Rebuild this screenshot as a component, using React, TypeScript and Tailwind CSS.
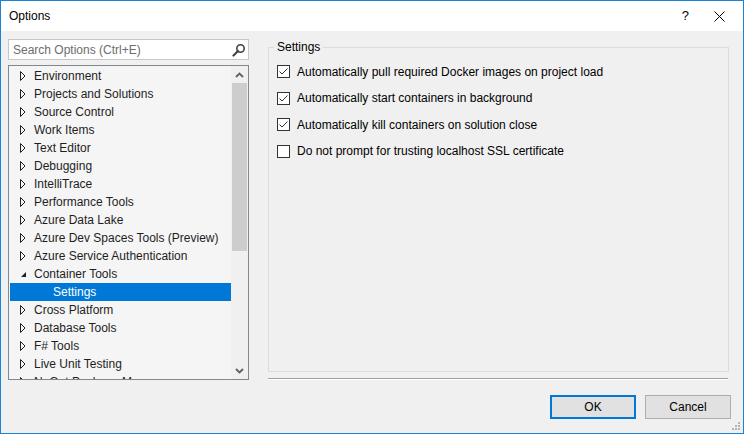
import React from "react";

const TREE_ITEMS: { label: string; level: number; expanded?: boolean; selected?: boolean }[] = [
  { label: "Environment", level: 0 },
  { label: "Projects and Solutions", level: 0 },
  { label: "Source Control", level: 0 },
  { label: "Work Items", level: 0 },
  { label: "Text Editor", level: 0 },
  { label: "Debugging", level: 0 },
  { label: "IntelliTrace", level: 0 },
  { label: "Performance Tools", level: 0 },
  { label: "Azure Data Lake", level: 0 },
  { label: "Azure Dev Spaces Tools (Preview)", level: 0 },
  { label: "Azure Service Authentication", level: 0 },
  { label: "Container Tools", level: 0, expanded: true },
  { label: "Settings", level: 1, selected: true },
  { label: "Cross Platform", level: 0 },
  { label: "Database Tools", level: 0 },
  { label: "F# Tools", level: 0 },
  { label: "Live Unit Testing", level: 0 },
  { label: "NuGet Package Manager", level: 0 },
];

const OPTIONS = [
  { label: "Automatically pull required Docker images on project load", checked: true },
  { label: "Automatically start containers in background", checked: true },
  { label: "Automatically kill containers on solution close", checked: true },
  { label: "Do not prompt for trusting localhost SSL certificate", checked: false },
];

function Collapsed() {
  return (
    <svg width="6" height="10" viewBox="0 0 6 10" className="shrink-0">
      <path d="M0.5 0.5 L5 5 L0.5 9.5 Z" fill="none" stroke="#1e1e1e" strokeWidth="1" />
    </svg>
  );
}

function Expanded() {
  return (
    <svg width="6" height="10" viewBox="0 0 6 10" className="shrink-0">
      <path d="M6 3 L6 8 L1 8 Z" fill="#1e1e1e" />
    </svg>
  );
}

function CheckBox({ checked }: { checked: boolean }) {
  return (
    <span className="w-[13px] h-[13px] border border-[#333333] bg-white flex items-center justify-center shrink-0">
      {checked && (
        <svg width="11" height="11" viewBox="0 0 11 11">
          <path d="M1.5 5.5 L4 8 L9.5 2.5" fill="none" stroke="#333333" strokeWidth="1" />
        </svg>
      )}
    </span>
  );
}

export default function App() {
  return (
    <div className="w-[744px] h-[434px] border border-[#1883d7] bg-[#f0f0f0] flex flex-col font-['Segoe_UI','Liberation_Sans',sans-serif] text-[12px] text-black overflow-hidden">
      {/* title bar */}
      <div className="h-[30px] bg-white flex items-center shrink-0">
        <span className="ml-[8px] text-[12px]">Options</span>
        <span className="ml-auto mr-[25px] text-[13px]">?</span>
        <svg width="11" height="11" viewBox="0 0 11 11" className="mr-[18px]">
          <path d="M0.5 0.5 L10.5 10.5 M10.5 0.5 L0.5 10.5" stroke="#000" strokeWidth="1" />
        </svg>
      </div>

      <div className="flex flex-1 pl-[7px]">
        {/* left column */}
        <div className="w-[241px] flex flex-col pt-[8px] shrink-0">
          <div className="h-[21px] border border-[#c7c7c7] bg-white flex items-center pl-[4px] pr-[2px]">
            <span className="text-[#6d6d6d]">Search Options (Ctrl+E)</span>
            <svg width="14" height="14" viewBox="0 0 14 14" className="ml-auto">
              <circle cx="8.5" cy="5.5" r="3.7" fill="none" stroke="#424242" strokeWidth="1.6" />
              <path d="M6 8 L1.5 12.5" stroke="#424242" strokeWidth="2.2" strokeLinecap="round" />
            </svg>
          </div>

          <div className="mt-[5px] h-[315px] border border-[#828790] bg-[#f5f5f5] flex">
            <div className="flex-1 overflow-hidden pl-[1px] pt-[1px]">
              {TREE_ITEMS.map((item) => (
                <div
                  key={item.label}
                  className={`h-[18px] flex items-center ${item.selected ? "bg-[#0078d7] text-white" : "text-[#1e1e1e]"}`}
                >
                  {item.level === 0 ? (
                    <>
                      <span className="w-[10px] shrink-0" />
                      {item.expanded ? <Expanded /> : <Collapsed />}
                      <span className="ml-[8px] whitespace-nowrap">{item.label}</span>
                    </>
                  ) : (
                    <span className="ml-[43px] whitespace-nowrap">{item.label}</span>
                  )}
                </div>
              ))}
            </div>
            <div className="w-[17px] bg-[#f0f0f0] flex flex-col shrink-0">
              <div className="h-[17px] flex items-center justify-center">
                <svg width="9" height="6" viewBox="0 0 9 6">
                  <path d="M1 5 L4.5 1.5 L8 5" fill="none" stroke="#606060" strokeWidth="1.8" />
                </svg>
              </div>
              <div className="h-[168px] mx-[1px] bg-[#cdcdcd]" />
              <div className="flex-1" />
              <div className="h-[17px] flex items-center justify-center">
                <svg width="9" height="6" viewBox="0 0 9 6">
                  <path d="M1 1 L4.5 4.5 L8 1" fill="none" stroke="#606060" strokeWidth="1.8" />
                </svg>
              </div>
            </div>
          </div>
        </div>

        {/* right column */}
        <div className="ml-[19px] w-[461px] flex flex-col pt-[16px]">
          <div className="relative h-[325px] border border-[#dcdcdc]">
            <span className="absolute -top-[9px] left-[5px] bg-[#f0f0f0] px-[3px] leading-[16px]">Settings</span>
            <div className="flex flex-col pt-[17px] pl-[8px] gap-[13.67px]">
              {OPTIONS.map((o) => (
                <div key={o.label} className="flex items-center h-[13px]">
                  <CheckBox checked={o.checked} />
                  <span className="ml-[7px] whitespace-nowrap">{o.label}</span>
                </div>
              ))}
            </div>
          </div>
          <div className="mt-[6px] border-t border-[#a0a0a0] border-b border-b-white w-[460px]" />
          <div className="flex justify-end gap-[9px] mt-[15px] mr-[-2px]">
            <button className="w-[86px] h-[24px] border-2 border-[#0078d7] bg-[#e1e1e1] text-[12px]">OK</button>
            <button className="w-[86px] h-[24px] border border-[#adadad] bg-[#e1e1e1] text-[12px]">Cancel</button>
          </div>
        </div>
      </div>
      <div className="relative h-0">
        <svg width="10" height="10" viewBox="0 0 10 10" className="absolute right-[2px] bottom-[2px]">
          <rect x="7" y="1" width="2" height="2" fill="#b4b4b4" />
          <rect x="4" y="4" width="2" height="2" fill="#b4b4b4" />
          <rect x="7" y="4" width="2" height="2" fill="#b4b4b4" />
          <rect x="1" y="7" width="2" height="2" fill="#b4b4b4" />
          <rect x="4" y="7" width="2" height="2" fill="#b4b4b4" />
          <rect x="7" y="7" width="2" height="2" fill="#b4b4b4" />
        </svg>
      </div>
    </div>
  );
}
